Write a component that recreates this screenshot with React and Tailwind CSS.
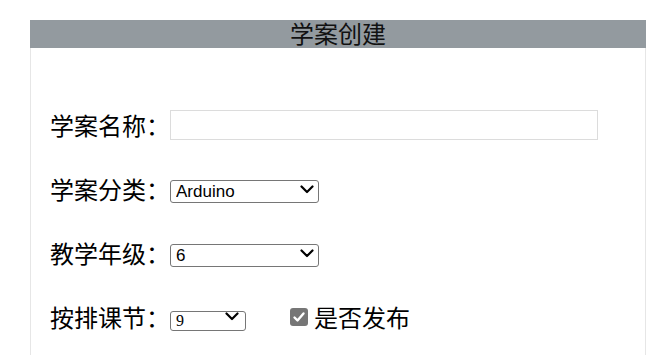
import React from 'react';

const cjk = { fontFamily: '"Noto Sans CJK SC", "Noto Sans", sans-serif' };

function Chevron({ className }) {
    return (
        <svg className={className} width="14" height="9" viewBox="0 0 14 9" fill="none">
            <polyline points="1.5,1.5 7,7 12.5,1.5" stroke="#000" strokeWidth="2.2" strokeLinecap="round" strokeLinejoin="round" />
        </svg>
    );
}

function Row({ label, children }) {
    return (
        <div className="flex items-center h-[40px]">
            <span className="w-[120px] shrink-0 text-[24px] leading-[40px] text-black">{label}</span>
            {children}
        </div>
    );
}

export default function App() {
    return (
        <div className="min-h-[355px] bg-white pt-[20px] pl-[30px]" style={cjk}>
            <div className="w-[616px]">
                <div className="h-[28px] bg-[#939a9f] text-center text-[24px] leading-[26px] text-[#111]">学案创建</div>
                <div className="border-x border-[#e6e6e6] pl-[19px] pt-[57px] pb-[20px] flex flex-col gap-[24px]">
                    <Row label="学案名称：">
                        <input type="text" className="w-[428px] h-[30px] border border-[#dcdcdc] bg-white" />
                    </Row>
                    <Row label="学案分类：">
                        <div className="relative mt-[3px]">
                            <select
                                defaultValue="Arduino"
                                className="appearance-none w-[149px] h-[23px] rounded-[3px] border border-[#767676] bg-white pl-[5px] text-[17px] leading-[21px] text-black"
                                style={{ fontFamily: '"Liberation Sans", Arial, sans-serif' }}
                            >
                                <option>Arduino</option>
                                <option>Scratch</option>
                                <option>Python</option>
                            </select>
                            <Chevron className="pointer-events-none absolute right-[5px] top-[7px]" />
                        </div>
                    </Row>
                    <Row label="教学年级：">
                        <div className="relative mt-[3px]">
                            <select
                                defaultValue="6"
                                className="appearance-none w-[149px] h-[23px] rounded-[3px] border border-[#767676] bg-white pl-[5px] text-[17px] leading-[21px] text-black"
                                style={{ fontFamily: '"Liberation Sans", Arial, sans-serif' }}
                            >
                                {[1, 2, 3, 4, 5, 6].map(n => <option key={n}>{n}</option>)}
                            </select>
                            <Chevron className="pointer-events-none absolute right-[5px] top-[7px]" />
                        </div>
                    </Row>
                    <Row label="按排课节：">
                        <div className="relative mt-[4px]">
                            <select
                                defaultValue="9"
                                className="appearance-none w-[76px] h-[20px] rounded-[3px] border border-[#767676] bg-white pl-[5px] text-[16px] leading-[18px] text-black"
                                style={{ fontFamily: '"Liberation Serif", "Times New Roman", serif' }}
                            >
                                {[1, 2, 3, 4, 5, 6, 7, 8, 9, 10].map(n => <option key={n}>{n}</option>)}
                            </select>
                            <Chevron className="pointer-events-none absolute right-[7px] top-[5px]" />
                        </div>
                        <label className="ml-[44px] flex items-center">
                            <span className="w-[18px] h-[18px] rounded-[3px] bg-[#767676] flex items-center justify-center">
                                <svg width="14" height="14" viewBox="0 0 14 14" fill="none">
                                    <polyline points="2.5,7.5 5.5,10.5 11.5,3.5" stroke="#fff" strokeWidth="2.4" strokeLinecap="round" strokeLinejoin="round" />
                                </svg>
                            </span>
                            <span className="ml-[6px] text-[24px] leading-[40px] text-black">是否发布</span>
                        </label>
                    </Row>
                </div>
            </div>
        </div>
    );
}
